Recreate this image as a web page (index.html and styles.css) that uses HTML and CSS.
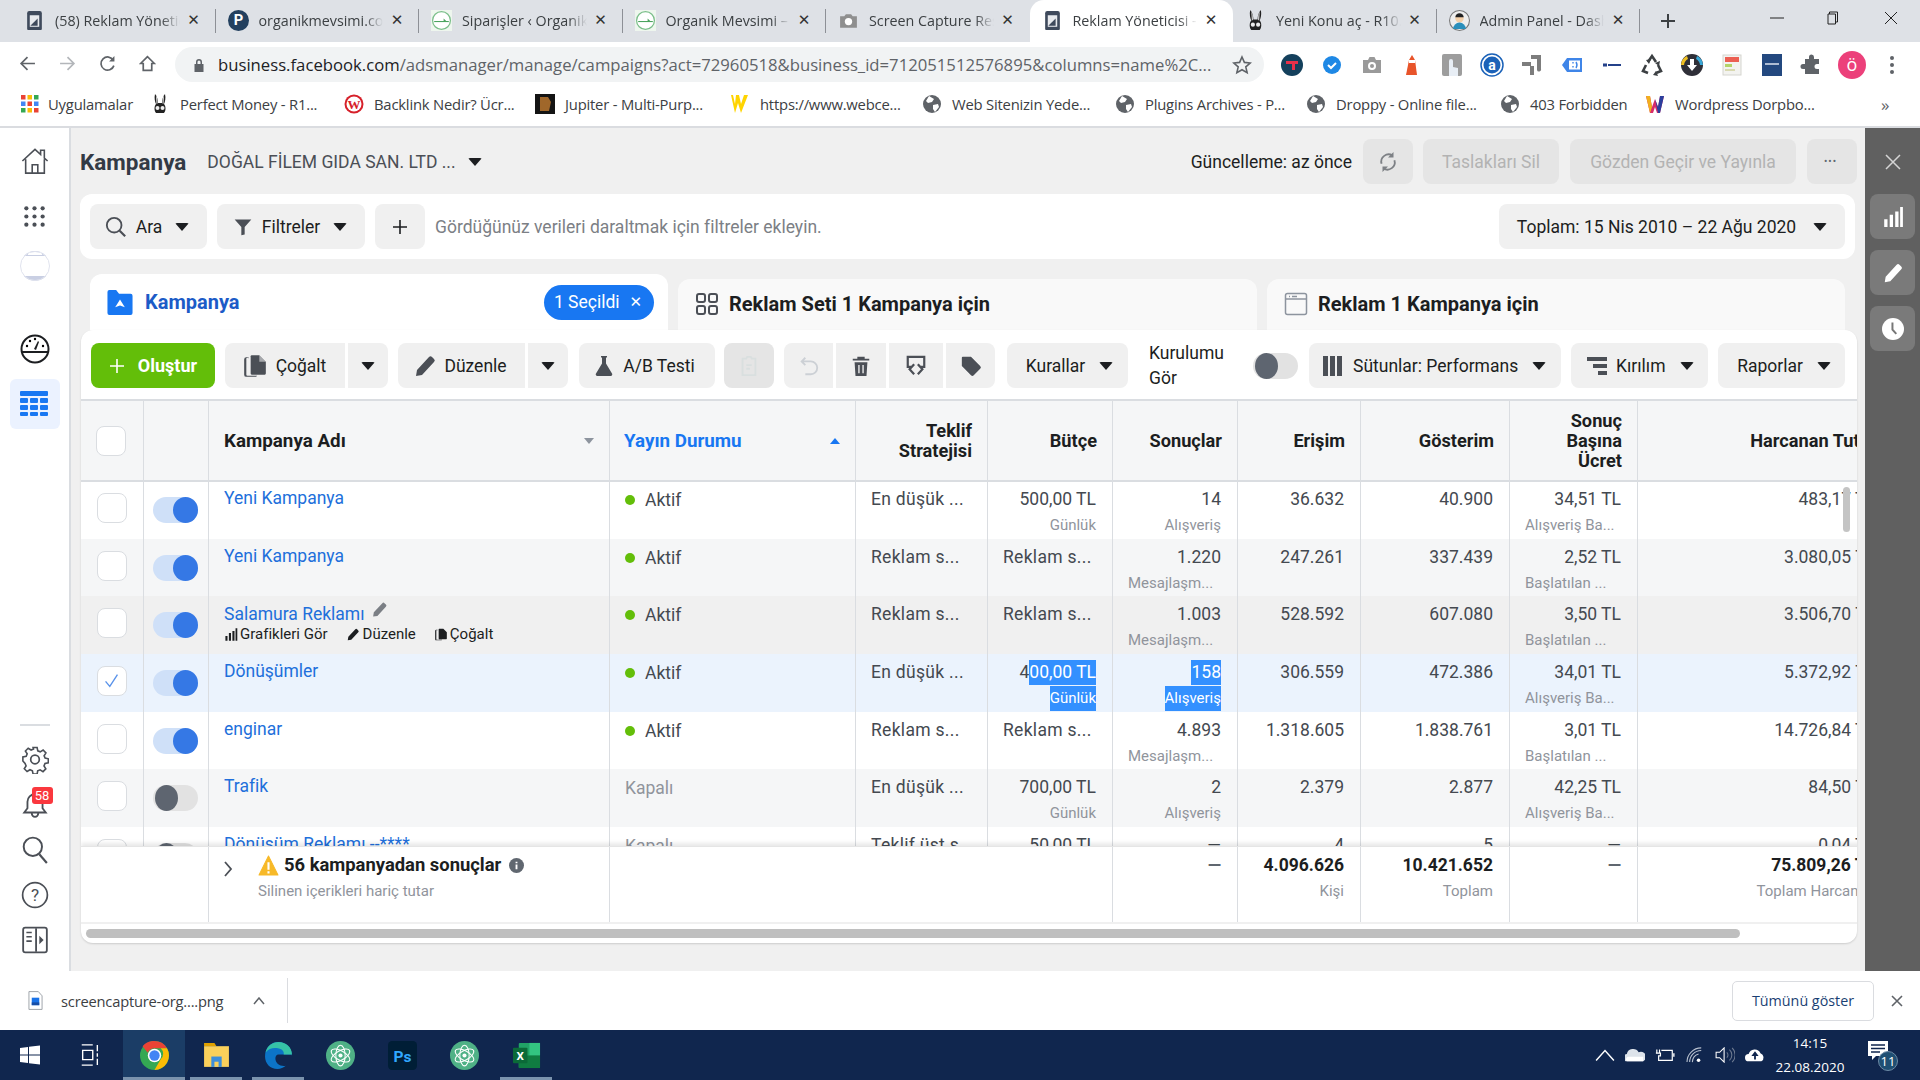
FILE: index.html
```html
<!DOCTYPE html>
<html lang="tr">
<head>
<meta charset="utf-8">
<title>Reklam Yöneticisi</title>
<link rel="stylesheet" href="styles.css">
</head>
<body>
<svg class="sprite" aria-hidden="true">
  <symbol id="fb-doc" viewBox="0 0 20 20"><path d="M3 3a2 2 0 0 1 2-2h10a2 2 0 0 1 2 2v15a1 1 0 0 1-1 1H4a1 1 0 0 1-1-1z" fill="#3f4a5c"/><rect x="5.500" y="5" width="9" height="11" fill="#e8eaee"/><path d="M6 15l7-7v7z" fill="#3f4a5c"/></symbol>
  <symbol id="leaf" viewBox="0 0 20 20"><rect width="20" height="20" fill="#eef6ee"/><circle cx="10" cy="10" r="8.500" fill="#fff" stroke="#7bbf8a" stroke-width="1.200"/><path d="M3 11h14" stroke="#4aa35e" stroke-width="1"/><path d="M12 8l3 3-3 0z" fill="#4aa35e"/></symbol>
  <symbol id="rabbit" viewBox="0 0 20 20"><path d="M5 0c2 2 3 6 3 9h4c0-3 1-7 3-9 1 4 0 8-1 10 2 2 2 7 0 9H6c-2-2-2-7 0-9-1-2-2-6-1-10z" fill="#222"/><path d="M6 1.500c1.500 2 1.500 6 1.500 8L6.500 10z" fill="#ddd"/><path d="M14 1.500c-1.500 2-1.500 6-1.500 8l1 .5z" fill="#ddd"/><circle cx="7.500" cy="14" r="2" fill="#eee"/><circle cx="12.500" cy="14" r="2" fill="#eee"/></symbol>
  <symbol id="globe" viewBox="0 0 20 20"><circle cx="10" cy="10" r="9" fill="#5f6368"/><path d="M7 2l5 3-2 3-4 1-2-2zM11 11l5-1 1 3-4 5-2-3z" fill="#fff"/></symbol>
  <symbol id="duplicate" viewBox="0 0 24 24"><path d="M6 4H4a2 2 0 0 0-2 2v14a2 2 0 0 0 2 2h9l1-1H5a1 1 0 0 1-1-1V6a1 1 0 0 1 2-1z" fill="#4b4f56"/><path d="M8 3a1 1 0 0 1 1-1h7l6 6v11a1 1 0 0 1-1 1H9a1 1 0 0 1-1-1z" fill="#4b4f56"/><path d="M16 2v6h6z" fill="#fff" opacity=".5"/></symbol>
  <symbol id="pencil" viewBox="0 0 24 24"><path d="M3 22l1-6L16 3a2 2 0 0 1 3 0l2 2a2 2 0 0 1 0 3L9 21z" fill="#4b4f56"/></symbol>
  <symbol id="flask" viewBox="0 0 24 24"><path d="M9 2h6v1.500h-1v6l6 10a1.600 1.600 0 0 1-1.500 2.500h-13A1.600 1.600 0 0 1 4 19.500l6-10v-6H9z" fill="#4b4f56"/></symbol>
  <symbol id="chart" viewBox="0 0 20 20"><path d="M2 12h3v7H2zM7 8h3v11H7zM12 5h3v14h-3zM16.500 1h2.500v18h-2.500z"/></symbol>
</svg>

<header class="tabstrip">
  <div class="tab"><svg class="fav"><use href="#fb-doc"/></svg><span class="tab-title">(58) Reklam Yöneticisi</span><span class="tab-x">✕</span></div>
  <div class="tab"><svg class="fav" viewBox="0 0 20 20"><circle cx="10" cy="10" r="10" fill="#23405f"/><text x="10" y="14.500" class="fav-p">P</text></svg><span class="tab-title">organikmevsimi.com</span><span class="tab-x">✕</span></div>
  <div class="tab"><svg class="fav"><use href="#leaf"/></svg><span class="tab-title">Siparişler ‹ Organik Mevsimi</span><span class="tab-x">✕</span></div>
  <div class="tab"><svg class="fav"><use href="#leaf"/></svg><span class="tab-title">Organik Mevsimi – Organik</span><span class="tab-x">✕</span></div>
  <div class="tab"><svg class="fav" viewBox="0 0 20 20"><path d="M2 6h4l1.500-2h5L14 6h4v11H2z" fill="#8f8f8f"/><circle cx="10" cy="11" r="3.500" fill="#fff"/></svg><span class="tab-title">Screen Capture Result</span><span class="tab-x">✕</span></div>
  <div class="tab tab-active"><svg class="fav"><use href="#fb-doc"/></svg><span class="tab-title">Reklam Yöneticisi - Kampanya</span><span class="tab-x">✕</span></div>
  <div class="tab"><svg class="fav"><use href="#rabbit"/></svg><span class="tab-title">Yeni Konu aç - R10.net</span><span class="tab-x">✕</span></div>
  <div class="tab"><svg class="fav" viewBox="0 0 20 20"><circle cx="10" cy="10" r="9.500" fill="#eee" stroke="#777"/><circle cx="10" cy="8" r="4" fill="#f3cfa8"/><path d="M6 7a4 4 0 0 1 8 0z" fill="#222"/><path d="M4 18a6 6 0 0 1 12 0z" fill="#2b8fbb"/></svg><span class="tab-title">Admin Panel - Dashboard</span><span class="tab-x">✕</span></div>
  <svg class="newtab" viewBox="0 0 16 16"><path d="M8 1v14M1 8h14" stroke="#3c4043" stroke-width="2"/></svg>
  <div class="winctl">
    <svg viewBox="0 0 14 14"><path d="M0 7h14" stroke="#222" stroke-width="1"/></svg>
    <svg viewBox="0 0 14 14"><path d="M3.500 3V1h8v10h-2M2 3h7.500v10H2z" fill="none" stroke="#222"/></svg>
    <svg viewBox="0 0 14 14"><path d="M1 1l12 12M13 1L1 13" stroke="#222"/></svg>
  </div>
</header>

<nav class="toolbar">
  <svg class="nav-ic" viewBox="0 0 16 16"><path d="M15 8H2M8 2L2 8l6 6" fill="none" stroke="#5f6368" stroke-width="1.600"/></svg>
  <svg class="nav-ic" viewBox="0 0 16 16"><path d="M1 8h13M8 2l6 6-6 6" fill="none" stroke="#b3b6ba" stroke-width="1.600"/></svg>
  <svg class="nav-ic" viewBox="0 0 16 16"><path d="M13.500 5A6.200 6.200 0 1 0 14 10" fill="none" stroke="#5f6368" stroke-width="1.600"/><path d="M14.500 1v5h-5z" fill="#5f6368"/></svg>
  <svg class="nav-ic" viewBox="0 0 16 16"><path d="M8 1.500L1.500 8H4v6.500h8V8h2.500z" fill="none" stroke="#5f6368" stroke-width="1.600"/></svg>
  <div class="omnibox">
    <svg class="lock" viewBox="0 0 12 14"><path d="M3 6V4a3 3 0 0 1 6 0v2h1.500v8h-9V6zm1.500 0h3V4a1.500 1.500 0 0 0-3 0z" fill="#5f6368"/></svg>
    <span class="url"><span class="url-host">business.facebook.com</span>/adsmanager/manage/campaigns?act=72960518&amp;business_id=712051512576895&amp;columns=name%2C...</span>
    <svg class="star" viewBox="0 0 20 20"><path d="M10 2l2.400 5.400 5.800.6-4.400 3.900 1.300 5.800L10 14.700l-5.100 3 1.300-5.800L1.800 8l5.800-.6z" fill="none" stroke="#5f6368" stroke-width="1.600"/></svg>
  </div>
  <div class="extensions">
    <svg viewBox="0 0 24 24"><circle cx="12" cy="12" r="11" fill="#14405c"/><path d="M6 8h12v3h-3v6h-3v-6H6z" fill="#e8304a"/></svg>
    <svg viewBox="0 0 24 24"><path d="M12 3a9 9 0 0 1 9 9 9 9 0 0 1-9 9 9 9 0 0 1-9-9 9 9 0 0 1 9-9z" fill="#1e88e5"/><path d="M8 12l3 3 5-5" fill="none" stroke="#fff" stroke-width="2"/></svg>
    <svg viewBox="0 0 24 24"><path d="M3 7h5l1.500-3h5L16 7h5v13H3z" fill="#9a9a9a"/><circle cx="12" cy="13" r="4" fill="#fff"/><circle cx="12" cy="13" r="2" fill="#9a9a9a"/></svg>
    <svg viewBox="0 0 24 24"><path d="M9 7l3-5 3 5 2 15H6z" fill="#e8542a"/><rect x="9" y="7" width="6" height="3" fill="#fff"/></svg>
    <svg viewBox="0 0 24 24"><rect x="2" y="1" width="20" height="22" rx="2" fill="#9d9d9d"/><path d="M9 20V8a2 2 0 0 1 4 0v6l5 1v8H9z" fill="#e8eef5"/></svg>
    <svg viewBox="0 0 24 24"><circle cx="12" cy="12" r="11" fill="#fff" stroke="#1b62b8" stroke-width="1.500"/><circle cx="12" cy="12" r="8.500" fill="#1b62b8"/><text x="12" y="16.500" class="ext-a">a</text></svg>
    <svg viewBox="0 0 24 24"><path d="M11 2h10v14a2 2 0 0 1-4 1V6h-6z M2 9h9v4H2z M10 13h4v9h-4z" fill="#7d7d7d"/></svg>
    <svg viewBox="0 0 24 24"><path d="M2 12l5-7h15v14H7z" fill="#3f85e8"/><rect x="9" y="7.500" width="11" height="9" fill="#fff"/><path d="M13 9v1.500M13 13v1.500M16 9q2 3 0 6" stroke="#3f85e8" stroke-width="1.400" fill="none"/></svg>
    <svg viewBox="0 0 24 24"><rect x="3" y="10.500" width="4" height="3" fill="#24418a"/><rect x="8" y="11" width="13" height="2" fill="#24418a"/></svg>
    <svg viewBox="0 0 24 24"><g fill="none" stroke="#3c4043" stroke-width="2.600"><path d="M8 9l4-6 4 6M18 12l3 6-5 2M8 20l-5-2 3-6"/></g><path d="M6 7l5-1-2 5zM13 22l3-4 2 5zM20 8l-1 5-4-3z" fill="#3c4043"/></svg>
    <svg viewBox="0 0 24 24"><circle cx="12" cy="12" r="11" fill="#2f2f38"/><path d="M1 12a11 11 0 0 1 6-9l1 3a8 8 0 0 0-4 6z" fill="#f0c021"/><path d="M23 12a11 11 0 0 0-6-9l-1 3a8 8 0 0 1 4 6z" fill="#39a8d8"/><path d="M10 6h4v6h3l-5 6-5-6h3z" fill="#fff"/></svg>
    <svg viewBox="0 0 24 24"><rect x="3" y="2" width="18" height="20" fill="#f3f3f0" stroke="#d5d5d0"/><rect x="5" y="4" width="14" height="5" fill="#ec5f52"/><rect x="5" y="11" width="7" height="3" fill="#b4d46a"/><rect x="5" y="16" width="10" height="2" fill="#d9d9b0"/></svg>
    <svg viewBox="0 0 24 24"><rect x="2" y="1" width="20" height="22" fill="#23487f"/><rect x="5" y="10" width="14" height="2" fill="#aebcd3"/></svg>
    <svg viewBox="0 0 24 24"><path d="M9 4a2.500 2.500 0 0 1 5 0v2h5v5h-2a2.500 2.500 0 0 0 0 5h2v5H5v-5H3a2.500 2.500 0 0 1 0-5h2V6h4z" fill="#5f6368"/></svg>
    <span class="avatar">ö</span>
    <svg viewBox="0 0 24 24"><circle cx="12" cy="5" r="2" fill="#5f6368"/><circle cx="12" cy="12" r="2" fill="#5f6368"/><circle cx="12" cy="19" r="2" fill="#5f6368"/></svg>
  </div>
</nav>

<div class="bookmarks">
  <div class="bm bm-apps"><svg viewBox="0 0 20 20"><rect x="1" y="1" width="4.500" height="4.500" fill="#ea4335"/><rect x="7.500" y="1" width="4.500" height="4.500" fill="#fbbc05"/><rect x="14" y="1" width="4.500" height="4.500" fill="#34a853"/><rect x="1" y="7.500" width="4.500" height="4.500" fill="#4285f4"/><rect x="7.500" y="7.500" width="4.500" height="4.500" fill="#ea4335"/><rect x="14" y="7.500" width="4.500" height="4.500" fill="#4285f4"/><rect x="1" y="14" width="4.500" height="4.500" fill="#34a853"/><rect x="7.500" y="14" width="4.500" height="4.500" fill="#fbbc05"/><rect x="14" y="14" width="4.500" height="4.500" fill="#ea4335"/></svg><span>Uygulamalar</span></div>
  <div class="bm"><svg><use href="#rabbit"/></svg><span>Perfect Money - R1...</span></div>
  <div class="bm"><svg viewBox="0 0 20 20"><circle cx="10" cy="10" r="9.500" fill="#d6202a"/><circle cx="10" cy="10" r="7.500" fill="#fff"/><text x="10" y="15" class="bm-w">W</text></svg><span>Backlink Nedir? Ücr...</span></div>
  <div class="bm"><svg viewBox="0 0 20 20"><rect width="20" height="20" fill="#141414"/><path d="M5 3h8l3 5-2 9H5z" fill="#a0672a"/></svg><span>Jupiter - Multi-Purp...</span></div>
  <div class="bm"><svg viewBox="0 0 20 20"><path d="M1 1l4 18 3-10 3 10 7-18-4 0-3 9-2-9-3 0-1 9-2-9z" fill="#ffd400"/></svg><span>https://www.webce...</span></div>
  <div class="bm"><svg><use href="#globe"/></svg><span>Web Sitenizin Yede...</span></div>
  <div class="bm"><svg><use href="#globe"/></svg><span>Plugins Archives - P...</span></div>
  <div class="bm"><svg><use href="#globe"/></svg><span>Droppy - Online file...</span></div>
  <div class="bm"><svg><use href="#globe"/></svg><span>403 Forbidden</span></div>
  <div class="bm"><svg viewBox="0 0 20 20"><rect x="1" y="1" width="18" height="18" fill="#fff"/><path d="M1 2h4l2 11 3-8 3 8 2-11h4l-4 17h-3l-2-6-2 6H5z" fill="#d92b6a"/><path d="M10 5l3 8 2-11h4l-4 17h-2z" fill="#2a3f9d"/><path d="M1 2h4l2 11-2 6z" fill="#f2b01e"/></svg><span>Wordpress Dorpbo...</span></div>
  <span class="bm-more">»</span>
</div>

<div class="app">
  <aside class="rail">
    <div class="rail-top">
      <svg class="rail-ic rail-home" viewBox="0 0 30 30"><path d="M1.500 15L15 2.500l6 5.500V3.500h4V12l3.500 3M5 13v15h20V13M12 28v-9h6v9" fill="none" stroke="#4b4f56" stroke-width="1.700"/></svg>
      <svg class="rail-ic rail-grid" viewBox="0 0 24 24"><g fill="#4b4f56"><circle cx="3.500" cy="3.500" r="2.200"/><circle cx="12" cy="3.500" r="2.200"/><circle cx="20.500" cy="3.500" r="2.200"/><circle cx="3.500" cy="12" r="2.200"/><circle cx="12" cy="12" r="2.200"/><circle cx="20.500" cy="12" r="2.200"/><circle cx="3.500" cy="20.500" r="2.200"/><circle cx="12" cy="20.500" r="2.200"/><circle cx="20.500" cy="20.500" r="2.200"/></g></svg>
      <svg class="rail-ic rail-biz" viewBox="0 0 30 30"><defs><clipPath id="biz"><circle cx="15" cy="15" r="15"/></clipPath></defs><g clip-path="url(#biz)"><rect width="30" height="30" fill="#fff"/><rect y="0" width="30" height="5" fill="#c9cfe3"/><rect y="25" width="30" height="5" fill="#c9cfe3"/><rect x="8" y="1" width="14" height="3" fill="#fff"/></g><circle cx="15" cy="15" r="14.500" fill="none" stroke="#e0e3ee"/></svg>
      <svg class="rail-ic rail-gauge" viewBox="0 0 30 30"><circle cx="15" cy="15" r="13.500" fill="none" stroke="#1c1e21" stroke-width="2"/><path d="M2 18h26" stroke="#1c1e21" stroke-width="2"/><path d="M14 15l4-8 1 1-3 8z" fill="#1c1e21"/><circle cx="7" cy="12" r="1.200"/><circle cx="10" cy="7" r="1.200"/><circle cx="15" cy="5" r="1.200"/><circle cx="23" cy="12" r="1.200"/></svg>
      <div class="rail-active"><svg viewBox="0 0 30 26"><g fill="#1877f2"><rect width="28" height="5" rx="1"/><rect y="7" width="8" height="5" rx="1"/><rect x="10" y="7" width="8" height="5" rx="1"/><rect x="20" y="7" width="8" height="5" rx="1"/><rect y="14" width="8" height="5" rx="1"/><rect x="10" y="14" width="8" height="5" rx="1"/><rect x="20" y="14" width="8" height="5" rx="1"/><rect y="21" width="8" height="4" rx="1"/><rect x="10" y="21" width="8" height="4" rx="1"/><rect x="20" y="21" width="8" height="4" rx="1"/></g></svg></div>
    </div>
    <div class="rail-bottom">
      <div class="rail-sep"></div>
      <svg class="rail-ic" viewBox="0 0 26 26"><path d="M11 1.500h4l.7 3.300 2.400 1 2.900-1.800 2.800 2.800-1.800 2.900 1 2.400 3.200.7v4l-3.300.7-1 2.400 1.800 2.900-2.800 2.800-2.900-1.800-2.400 1-.6 3.200h-4l-.7-3.300-2.400-1-2.900 1.800-2.800-2.800 1.800-2.900-1-2.400L.8 15v-4l3.300-.7 1-2.400-1.800-2.900 2.800-2.800 2.900 1.800 2.400-1z" transform="translate(1 0) scale(.93)" fill="none" stroke="#4b4f56" stroke-width="1.600"/><circle cx="13" cy="12.500" r="4" fill="none" stroke="#4b4f56" stroke-width="1.600"/></svg>
      <div class="rail-bell">
        <svg class="rail-ic" viewBox="0 0 26 26"><path d="M13 3a7 7 0 0 1 7 7v6l3 4H3l3-4v-6a7 7 0 0 1 7-7zM10 21a3 3 0 0 0 6 0" fill="none" stroke="#4b4f56" stroke-width="1.700"/></svg>
        <span class="bell-badge">58</span>
      </div>
      <svg class="rail-ic" viewBox="0 0 26 26"><circle cx="11" cy="10" r="8.500" fill="none" stroke="#4b4f56" stroke-width="1.800"/><path d="M17 17l7 8" stroke="#4b4f56" stroke-width="2"/></svg>
      <svg class="rail-ic" viewBox="0 0 26 26"><circle cx="13" cy="13" r="11.500" fill="none" stroke="#4b4f56" stroke-width="1.600"/><text x="13" y="18.500" class="rail-q">?</text></svg>
      <svg class="rail-ic" viewBox="0 0 26 26"><rect x="2" y="1.500" width="22" height="23" rx="2" fill="none" stroke="#4b4f56" stroke-width="1.700"/><path d="M14 2v22" stroke="#4b4f56" stroke-width="1.700"/><path d="M5 6h5M5 10h5M5 14h5" stroke="#4b4f56" stroke-width="1.500"/><path d="M17 9l4 4-4 4z" fill="#4b4f56"/></svg>
    </div>
  </aside>

  <main class="workspace">
    <div class="page-head">
      <h1 class="page-title">Kampanya</h1>
      <span class="account">DOĞAL FİLEM GIDA SAN. LTD ...</span><i class="caret"></i>
      <span class="updated">Güncelleme: az önce</span>
      <button class="btn btn-off btn-refresh"><svg viewBox="0 0 24 24"><path d="M5 14a8 8 0 0 1 12-9M19 10a8 8 0 0 1-12 9" fill="none" stroke="#7d8085" stroke-width="2"/><path d="M18 1v6h-6zM6 23v-6h6z" fill="#7d8085"/></svg></button>
      <button class="btn btn-off btn-drafts">Taslakları Sil</button>
      <button class="btn btn-off btn-review">Gözden Geçir ve Yayınla</button>
      <button class="btn btn-off btn-more">•••</button>
    </div>

    <div class="filter-card">
      <button class="btn btn-ara"><svg viewBox="0 0 24 24"><circle cx="10" cy="10" r="8" fill="none" stroke="#4b4f56" stroke-width="2"/><path d="M16 16l6 6" stroke="#4b4f56" stroke-width="2.400"/></svg>Ara<i class="caret"></i></button>
      <button class="btn btn-filter"><svg viewBox="0 0 24 24"><path d="M2 3h20l-8 9v9l-4 1V12z" fill="#4b4f56"/></svg>Filtreler<i class="caret"></i></button>
      <button class="btn btn-plus"><svg viewBox="0 0 16 16"><path d="M8 1v14M1 8h14" stroke="#1c1e21" stroke-width="1.600"/></svg></button>
      <span class="filter-hint">Gördüğünüz verileri daraltmak için filtreler ekleyin.</span>
      <button class="btn btn-date">Toplam: 15 Nis 2010 – 22 Ağu 2020<i class="caret"></i></button>
    </div>

    <div class="tabs">
      <div class="level level-active">
        <svg class="level-ic" viewBox="0 0 28 28"><path d="M1 3a2 2 0 0 1 2-2h7l3 4h12a2 2 0 0 1 2 2v18a2 2 0 0 1-2 2H3a2 2 0 0 1-2-2z" fill="#1877f2"/><path d="M14 11l5 8-5-2-5 2z" fill="#fff"/></svg>
        <span class="level-name">Kampanya</span>
        <span class="chip">1 Seçildi<span class="chip-x">✕</span></span>
      </div>
      <div class="level">
        <svg class="level-ic" viewBox="0 0 24 24"><g fill="none" stroke="#4b4f56" stroke-width="2"><rect x="2" y="2" width="8" height="8" rx="2"/><rect x="14" y="2" width="8" height="8" rx="2"/><rect x="2" y="14" width="8" height="8" rx="2"/><rect x="14" y="14" width="8" height="8" rx="2"/></g></svg>
        <span class="level-label">Reklam Seti 1 Kampanya için</span>
      </div>
      <div class="level">
        <svg class="level-ic" viewBox="0 0 24 24"><rect x="1.500" y="1.500" width="21" height="21" rx="2" fill="none" stroke="#8d949e" stroke-width="1.500"/><path d="M2 7h20M5 4.500h1M8 4.500h5" stroke="#8d949e" stroke-width="1.500"/></svg>
        <span class="level-label">Reklam 1 Kampanya için</span>
      </div>
    </div>

    <section class="table-card">
      <div class="actions">
        <button class="btn btn-create"><svg viewBox="0 0 16 16"><path d="M8 1v14M1 8h14" stroke="#fff" stroke-width="1.600"/></svg>Oluştur</button>
        <div class="split">
          <button class="btn btn-dup"><svg viewBox="0 0 24 24"><use href="#duplicate"/></svg>Çoğalt</button>
          <button class="btn btn-split"><i class="caret"></i></button>
        </div>
        <div class="split">
          <button class="btn btn-edit"><svg viewBox="0 0 24 24"><use href="#pencil"/></svg>Düzenle</button>
          <button class="btn btn-split"><i class="caret"></i></button>
        </div>
        <button class="btn btn-ab"><svg viewBox="0 0 24 24"><use href="#flask"/></svg>A/B Testi</button>
        <button class="btn btn-off btn-clip"><svg viewBox="0 0 24 24"><path d="M5 4h4l1-2h4l1 2h4v18H5z" fill="none" stroke="#d9dfdf" stroke-width="2"/><path d="M9 11h6M9 15h4" stroke="#d9dfdf" stroke-width="2"/></svg></button>
        <div class="icon-group">
          <button class="btn btn-ic-a"><svg viewBox="0 0 24 24"><path d="M8 3L4 7l4 4M4 7h10a7 7 0 0 1 0 14H8" fill="none" stroke="#ccd0d5" stroke-width="2"/></svg></button>
          <button class="btn btn-ic-b"><svg viewBox="0 0 24 24"><path d="M8 4V2h8v2h5v2H3V4zM5 8h14l-1 15H6zM9 11v9h1.500v-9zM13.500 11v9H15v-9z" fill="#4b4f56" fill-rule="evenodd"/></svg></button>
          <button class="btn btn-ic-c"><svg viewBox="0 0 24 24"><path d="M7 13H3V2h18v11h-4" fill="none" stroke="#4b4f56" stroke-width="2.400"/><path d="M10 10l-5 5.500 5 5.500M14 10l5 5.500-5 5.500" fill="none" stroke="#4b4f56" stroke-width="2.400"/></svg></button>
          <button class="btn btn-ic-d"><svg viewBox="0 0 24 24"><path d="M2 3a1 1 0 0 1 1-1h9l10 10a2 2 0 0 1 0 3l-7 7a2 2 0 0 1-3 0L2 12z" fill="#4b4f56"/></svg></button>
        </div>
        <button class="btn btn-rules">Kurallar<i class="caret"></i></button>
        <span class="setup-label">Kurulumu<br>Gör</span>
        <span class="toggle toggle-off toggle-setup"></span>
        <button class="btn btn-cols"><svg viewBox="0 0 20 20"><path d="M0 0h5v20H0zM7 0h5v20H7zM14 0h5v20h-5z" fill="#4b4f56"/></svg>Sütunlar: Performans<i class="caret"></i></button>
        <button class="btn btn-break"><svg viewBox="0 0 20 20"><path d="M0 1h20v4H0zM6 8h14v4H6zM11 15h9v4h-9z" fill="#4b4f56"/></svg>Kırılım<i class="caret"></i></button>
        <button class="btn btn-reports">Raporlar<i class="caret"></i></button>
      </div>

      <div class="grid-wrap">
        <div class="row row-head">
          <div class="cell"><span class="check"></span></div>
          <div class="cell"></div>
          <div class="cell th-left">Kampanya Adı<i class="sort sort-down"></i></div>
          <div class="cell th-left th-active">Yayın Durumu<i class="sort sort-up"></i></div>
          <div class="cell th">Teklif<br>Stratejisi</div>
          <div class="cell th">Bütçe</div>
          <div class="cell th">Sonuçlar</div>
          <div class="cell th">Erişim</div>
          <div class="cell th">Gösterim</div>
          <div class="cell th">Sonuç<br>Başına<br>Ücret</div>
          <div class="cell th">Harcanan Tutar</div>
        </div>

        <div class="rows">
          <div class="row">
            <div class="cell cell-check"><span class="check"></span></div>
            <div class="cell cell-toggle"><span class="toggle"></span></div>
            <div class="cell cell-name"><a>Yeni Kampanya</a></div>
            <div class="cell cell-status"><i class="dot"></i>Aktif</div>
            <div class="cell cell-text">En düşük ...</div>
            <div class="cell num">500,00 TL<small>Günlük</small></div>
            <div class="cell num">14<small>Alışveriş</small></div>
            <div class="cell num">36.632</div>
            <div class="cell num">40.900</div>
            <div class="cell num">34,51 TL<small class="trunc">Alışveriş Ba...</small></div>
            <div class="cell num">483,17 TL</div>
          </div>
          <div class="row row-alt">
            <div class="cell cell-check"><span class="check"></span></div>
            <div class="cell cell-toggle"><span class="toggle"></span></div>
            <div class="cell cell-name"><a>Yeni Kampanya</a></div>
            <div class="cell cell-status"><i class="dot"></i>Aktif</div>
            <div class="cell cell-text">Reklam s...</div>
            <div class="cell cell-text">Reklam s...</div>
            <div class="cell num">1.220<small class="trunc">Mesajlaşm...</small></div>
            <div class="cell num">247.261</div>
            <div class="cell num">337.439</div>
            <div class="cell num">2,52 TL<small class="trunc">Başlatılan ...</small></div>
            <div class="cell num">3.080,05 TL</div>
          </div>
          <div class="row row-hover">
            <div class="cell cell-check"><span class="check"></span></div>
            <div class="cell cell-toggle"><span class="toggle"></span></div>
            <div class="cell cell-name"><a>Salamura Reklamı</a><svg class="name-pen" viewBox="0 0 24 24"><path d="M3 22l1-6L16 3a2 2 0 0 1 3 0l2 2a2 2 0 0 1 0 3L9 21z" fill="#7b7f85"/></svg>
              <div class="row-tools">
                <span class="tool tool-chart"><svg viewBox="0 0 20 20"><use href="#chart"/></svg>Grafikleri Gör</span>
                <span class="tool tool-edit"><svg viewBox="0 0 24 24"><path d="M3 22l1-6L16 3a2 2 0 0 1 3 0l2 2a2 2 0 0 1 0 3L9 21z"/></svg>Düzenle</span>
                <span class="tool"><svg viewBox="0 0 24 24"><path d="M6 4H4a2 2 0 0 0-2 2v14a2 2 0 0 0 2 2h9l1-1H5a1 1 0 0 1-1-1V6a1 1 0 0 1 2-1zM8 3a1 1 0 0 1 1-1h7l6 6v11a1 1 0 0 1-1 1H9a1 1 0 0 1-1-1z"/></svg>Çoğalt</span>
              </div>
            </div>
            <div class="cell cell-status"><i class="dot"></i>Aktif</div>
            <div class="cell cell-text">Reklam s...</div>
            <div class="cell cell-text">Reklam s...</div>
            <div class="cell num">1.003<small class="trunc">Mesajlaşm...</small></div>
            <div class="cell num">528.592</div>
            <div class="cell num">607.080</div>
            <div class="cell num">3,50 TL<small class="trunc">Başlatılan ...</small></div>
            <div class="cell num">3.506,70 TL</div>
          </div>
          <div class="row row-selected">
            <div class="cell cell-check"><span class="check check-on"><svg viewBox="0 0 20 20"><path d="M3 11l5 6 9-14" fill="none" stroke="#5a93ea" stroke-width="1.600"/></svg></span></div>
            <div class="cell cell-toggle"><span class="toggle"></span></div>
            <div class="cell cell-name"><a>Dönüşümler</a></div>
            <div class="cell cell-status"><i class="dot"></i>Aktif</div>
            <div class="cell cell-text">En düşük ...</div>
            <div class="cell num">4<span class="sel">00,00 TL</span><small><span class="sel">Günlük</span></small></div>
            <div class="cell num"><span class="sel">158</span><small><span class="sel">Alışveriş</span></small></div>
            <div class="cell num">306.559</div>
            <div class="cell num">472.386</div>
            <div class="cell num">34,01 TL<small class="trunc">Alışveriş Ba...</small></div>
            <div class="cell num">5.372,92 TL</div>
          </div>
          <div class="row">
            <div class="cell cell-check"><span class="check"></span></div>
            <div class="cell cell-toggle"><span class="toggle"></span></div>
            <div class="cell cell-name"><a>enginar</a></div>
            <div class="cell cell-status"><i class="dot"></i>Aktif</div>
            <div class="cell cell-text">Reklam s...</div>
            <div class="cell cell-text">Reklam s...</div>
            <div class="cell num">4.893<small class="trunc">Mesajlaşm...</small></div>
            <div class="cell num">1.318.605</div>
            <div class="cell num">1.838.761</div>
            <div class="cell num">3,01 TL<small class="trunc">Başlatılan ...</small></div>
            <div class="cell num">14.726,84 TL</div>
          </div>
          <div class="row row-alt">
            <div class="cell cell-check"><span class="check"></span></div>
            <div class="cell cell-toggle"><span class="toggle toggle-off"></span></div>
            <div class="cell cell-name"><a>Trafik</a></div>
            <div class="cell cell-status cell-off">Kapalı</div>
            <div class="cell cell-text">En düşük ...</div>
            <div class="cell num">700,00 TL<small>Günlük</small></div>
            <div class="cell num">2<small>Alışveriş</small></div>
            <div class="cell num">2.379</div>
            <div class="cell num">2.877</div>
            <div class="cell num">42,25 TL<small class="trunc">Alışveriş Ba...</small></div>
            <div class="cell num">84,50 TL</div>
          </div>
          <div class="row">
            <div class="cell cell-check"><span class="check"></span></div>
            <div class="cell cell-toggle"><span class="toggle toggle-off"></span></div>
            <div class="cell cell-name"><a>Dönüşüm Reklamı --****</a></div>
            <div class="cell cell-status cell-off">Kapalı</div>
            <div class="cell cell-text">Teklif üst s...</div>
            <div class="cell num">50,00 TL</div>
            <div class="cell num">—</div>
            <div class="cell num">4</div>
            <div class="cell num">5</div>
            <div class="cell num">—</div>
            <div class="cell num">0,04 TL</div>
          </div>
        </div>

        <div class="row row-foot">
          <div class="cell foot-blank"></div>
          <div class="cell foot-name">
            <svg class="foot-chevron" viewBox="0 0 10 16"><path d="M2 1l6 7-6 7" fill="none" stroke="#4b4f56" stroke-width="1.800"/></svg>
            <div>
              <div class="foot-title"><svg viewBox="0 0 20 20"><path d="M10 1l9 18H1z" fill="#f7b928" stroke="#f7b928" stroke-linejoin="round"/><path d="M10 7v7M10 15.500v2" stroke="#fff" stroke-width="2"/></svg>56 kampanyadan sonuçlar<svg class="foot-info" viewBox="0 0 16 16"><circle cx="8" cy="8" r="8" fill="#606770"/><path d="M8 7v5M8 4v1.600" stroke="#fff" stroke-width="2"/></svg></div>
              <small>Silinen içerikleri hariç tutar</small>
            </div>
          </div>
          <div class="cell foot-gap"></div>
          <div class="cell num foot-num foot-dash">—</div>
          <div class="cell num foot-num">4.096.626<small>Kişi</small></div>
          <div class="cell num foot-num">10.421.652<small>Toplam</small></div>
          <div class="cell num foot-num foot-dash">—</div>
          <div class="cell num foot-num">75.809,26 TL<small>Toplam Harcanan</small></div>
        </div>
      </div>
      <div class="hscroll"><div class="hscroll-thumb"></div></div>
      <div class="vscroll"></div>
    </section>
  </main>

  <aside class="side-panel">
    <svg class="panel-x" viewBox="0 0 16 16"><path d="M1 1l14 14M15 1L1 15" stroke="#d5d5d5" stroke-width="1.500"/></svg>
    <button class="panel-btn"><svg viewBox="0 0 20 20"><use href="#chart"/></svg></button>
    <button class="panel-btn"><svg viewBox="0 0 24 24"><path d="M3 22l1-6L16 3a2 2 0 0 1 3 0l2 2a2 2 0 0 1 0 3L9 21z"/></svg></button>
    <button class="panel-btn"><svg viewBox="0 0 20 20"><circle cx="10" cy="10" r="10"/><path d="M9.500 4v6.500l3.500 4" fill="none" stroke="#777" stroke-width="1.800"/></svg></button>
  </aside>
</div>

<div class="downloads">
  <svg class="dl-file" viewBox="0 0 16 20"><path d="M1 .500h10L15 5v14.500H1z" fill="#fff" stroke="#9aa0a6"/><rect x="4" y="7" width="8" height="8" fill="#1a73e8"/><rect x="4" y="12" width="8" height="3" fill="#174ea6"/></svg>
  <span class="dl-name">screencapture-org....png</span>
  <svg class="dl-chev" viewBox="0 0 12 8"><path d="M1 7l5-6 5 6" fill="none" stroke="#5f6368" stroke-width="1.500"/></svg>
  <span class="dl-sep"></span>
  <button class="dl-all">Tümünü göster</button>
  <svg class="dl-x" viewBox="0 0 12 12"><path d="M1 1l10 10M11 1L1 11" stroke="#5f6368" stroke-width="1.600"/></svg>
</div>

<footer class="taskbar">
  <div class="task task-start"><svg viewBox="0 0 20 20"><path d="M0 3l8-1v7.500H0zM9 1.800L20 .5v9H9zM0 10.500h8V18l-8-1zM9 10.500h11v9L9 18.200z" fill="#fff"/></svg></div>
  <div class="task task-view"><svg viewBox="0 0 20 24"><path d="M1 1h12M1 23h12M2 7h11v10H2zM18 1v7M18 10v4M18 16v7" fill="none" stroke="#fff" stroke-width="1.500"/></svg></div>
  <div class="task task-active task-open"><svg viewBox="0 0 28 28" class="ic-lg"><circle cx="14" cy="14" r="14" fill="#34a853"/><path d="M14 0a14 14 0 0 1 12.100 7H14a7 7 0 0 0-6.500 4.400L2.500 5A14 14 0 0 1 14 0z" fill="#ea4335"/><path d="M26.100 7A14 14 0 0 1 14 28l6-10.500a7 7 0 0 0 0-10.500z" fill="#fbbc05"/><circle cx="14" cy="14" r="6.500" fill="#fff"/><circle cx="14" cy="14" r="5" fill="#4285f4"/></svg></div>
  <div class="task task-open"><svg viewBox="0 0 28 28" class="ic-lg"><path d="M2 2h10l2 3h-12z" fill="#e0a100"/><path d="M2 5h24v20H2z" fill="#fbd15b"/><path d="M9 15h10v10H9z" fill="#3d8fdc"/><rect x="12" y="20" width="4" height="5" fill="#fbd15b"/></svg></div>
  <div class="task task-open-none"><svg viewBox="0 0 28 28" class="ic-lg"><path d="M27 15C27 6 21 1 14 1 6 1 1 7 1 15c0 7 5 12 12 12 3 0 6-1 8-3-5 1-10-2-10-7 0-2 1-4 3-4h13z" fill="#0c74c7"/><path d="M14 1C8 1 3 5 1.500 11c3-4 8-5 12-4 5 1 6 4 5.500 6H27C27 6 21 1 14 1z" fill="#36c2a6"/></svg></div>
  <div class="task"><svg viewBox="0 0 28 28" class="ic-lg"><circle cx="14" cy="14" r="14" fill="#4fb186"/><g fill="none" stroke="#fff" stroke-width="1"><ellipse cx="14" cy="14" rx="4.500" ry="10"/><ellipse cx="14" cy="14" rx="4.500" ry="10" transform="rotate(60 14 14)"/><ellipse cx="14" cy="14" rx="4.500" ry="10" transform="rotate(-60 14 14)"/></g><circle cx="14" cy="14" r="2" fill="#fff"/></svg></div>
  <div class="task"><svg viewBox="0 0 28 28" class="ic-lg"><rect width="28" height="28" rx="4" fill="#001e36"/><text x="14" y="20" class="ps">Ps</text></svg></div>
  <div class="task"><svg viewBox="0 0 28 28" class="ic-lg"><circle cx="14" cy="14" r="14" fill="#4fb186"/><g fill="none" stroke="#fff" stroke-width="1"><ellipse cx="14" cy="14" rx="4.500" ry="10"/><ellipse cx="14" cy="14" rx="4.500" ry="10" transform="rotate(60 14 14)"/><ellipse cx="14" cy="14" rx="4.500" ry="10" transform="rotate(-60 14 14)"/></g><circle cx="14" cy="14" r="2" fill="#fff"/></svg></div>
  <div class="task task-open"><svg viewBox="0 0 30 28" class="ic-lg"><rect x="7" y="1" width="22" height="26" rx="1" fill="#21a366"/><rect x="18" y="1" width="11" height="13" fill="#33c481"/><rect x="7" y="14" width="22" height="13" fill="#107c41"/><rect x="1" y="6" width="15" height="16" rx="1" fill="#0b6a38"/><text x="8.500" y="19" class="xl">X</text></svg></div>
  <div class="tray">
    <svg viewBox="0 0 18 12"><path d="M1 11l8-9 8 9" fill="none" stroke="#fff" stroke-width="1.300"/></svg>
    <svg viewBox="0 0 22 16"><path d="M2 15a4 4 0 0 1 0-8 7 7 0 0 1 13-2 5 5 0 0 1 5 10z" fill="#dde3ea"/><path d="M2 15a3 3 0 0 1 3-5h15v5z" fill="#fff"/></svg>
    <svg viewBox="0 0 22 16"><path d="M5 2v4M2 2v4M1 6h5v3H4v5h15V3H7" fill="none" stroke="#fff" stroke-width="1.300"/><path d="M20 6h1.500v4H20z" fill="#fff"/></svg>
    <svg viewBox="0 0 20 18"><path d="M1 17A16 16 0 0 1 17 1M4 17A13 13 0 0 1 17 4M7 17A10 10 0 0 1 14 8" fill="none" stroke="#b9c2d0" stroke-width="1.200"/><circle cx="14" cy="15" r="2" fill="#fff"/></svg>
    <svg viewBox="0 0 22 18"><path d="M1 6h4l5-5v16l-5-5H1z" fill="none" stroke="#fff" stroke-width="1.200"/><path d="M13 6a4 4 0 0 1 0 6M16 3a8 8 0 0 1 0 12M19 1a11 11 0 0 1 0 16" fill="none" stroke="#6d7a90" stroke-width="1.200"/></svg>
    <svg viewBox="0 0 22 16"><path d="M4 15a4 4 0 0 1 0-8 7 7 0 0 1 13-1 5 5 0 0 1 1 9z" fill="#fff"/><path d="M11 4l-4 5h3v4h2V9h3z" fill="#10264e"/></svg>
  </div>
  <div class="clock"><span>14:15</span><span>22.08.2020</span></div>
  <div class="notif"><svg viewBox="0 0 20 20"><path d="M0 0h20v15H8l-4 4v-4H0z" fill="#fff"/><path d="M3 4h14M3 7.500h14M3 11h9" stroke="#10264e" stroke-width="1.300"/></svg><span class="notif-count">11</span></div>
</footer>
</body>
</html>
```

FILE: styles.css
```css
* { box-sizing: border-box; }
html, body { margin: 0; height: 100%; }
body {
  width: 1920px; height: 1080px; overflow: hidden;
  display: flex; flex-direction: column;
  font-family: Roboto, "Liberation Sans", sans-serif;
  color: #1c1e21; background: #fff;
}
.sprite { display: none; }
button { font: inherit; border: 0; padding: 0; color: inherit; }
svg { display: block; flex: none; }

/* Browser chrome */
.tabstrip {
  height: 42px; flex: none; background: #dee1e6;
  display: flex; align-items: stretch; padding-left: 12px; position: relative;
  font-family: "Open Sans", "Noto Sans", sans-serif;
}
.tab {
  width: 203.500px; display: flex; align-items: center; padding: 0 15px 2px 12px; position: relative;
  font-size: 14.300px; color: #3c4043;
}
.tab::after { content: ""; position: absolute; right: 0; top: 9px; bottom: 9px; width: 1px; background: #8d9096; }
.tab:nth-child(5)::after, .tab-active::after { display: none; }
.tab-active { background: #fff; border-radius: 14px 14px 0 0; color: #3c4043; }
.fav { width: 21px; height: 21px; margin-right: 10px; }
.fav-p { font: bold 14px Roboto, sans-serif; fill: #fff; text-anchor: middle; }
.tab-title { flex: 1; overflow: hidden; white-space: nowrap; -webkit-mask-image: linear-gradient(90deg, #000 85%, transparent); mask-image: linear-gradient(90deg, #000 85%, transparent); }
.tab-x { width: 14px; margin-left: 7px; font-size: 15px; font-weight: 700; color: #333; text-align: center; font-family: "DejaVu Sans", sans-serif; }
.newtab { width: 16px; height: 16px; align-self: center; margin-left: 20px; }
.winctl { margin-left: auto; display: flex; align-self: flex-start; margin-top: 11px; }
.winctl svg { width: 14px; height: 14px; margin-right: 42px; }
.winctl svg:nth-child(2) { margin-right: 44px; }
.winctl svg:last-child { margin-right: 22px; }

.toolbar {
  height: 42px; flex: none; background: #fff; display: flex; align-items: center;
  padding-left: 19px;
  font-family: "Open Sans", "Noto Sans", sans-serif;
}
.nav-ic { width: 17px; height: 17px; margin-right: 23px; }
.omnibox {
  width: 1089px; height: 35px; margin: 3px 0 0 -4px; background: #f1f3f4; border-radius: 18px;
  display: flex; align-items: center; padding: 0 12px 0 18px; font-size: 16.700px; color: #5f6368;
}
.lock { width: 12px; height: 14px; margin-right: 13px; }
.url { flex: 1; white-space: nowrap; overflow: hidden; }
.url-host { color: #202124; }
.star { width: 20px; height: 20px; }
.extensions { display: flex; align-items: center; margin-left: 16px; margin-top: 3px; gap: 16px; }
.extensions svg { width: 24px; height: 24px; }
.ext-a { font: bold 14px Roboto, sans-serif; fill: #fff; text-anchor: middle; }
.avatar { width: 28px; height: 28px; border-radius: 50%; background: #ec407a; color: #fff; font-size: 18px; line-height: 26px; text-align: center; margin: 0 -2px; }

.bookmarks {
  height: 44px; flex: none; background: #fff; border-bottom: 2px solid #dadce0;
  display: grid; align-items: center; padding: 0 0 2px 20px;
  grid-template-columns: 130px 194px 191px 195px 192px 193px 191px 194px 145px 236px 1fr;
  font-family: "Open Sans", "Noto Sans", sans-serif; font-size: 14.800px; color: #3c4043;
}
.bm { display: flex; align-items: center; gap: 10px; white-space: nowrap; letter-spacing: -.2px; }
.bm-apps { gap: 8px; }
.bm svg { width: 20px; height: 20px; }
.bm-w { font: bold 13px "Liberation Serif", serif; fill: #d6202a; text-anchor: middle; }
.bm-more { font-size: 17px; color: #5f6368; }

/* App frame */
.app { flex: 1; min-height: 0; display: flex; background: #f0f0f0; }
.rail {
  width: 71px; flex: none; background: #fff; border-right: 2px solid #dadde1;
  display: flex; flex-direction: column; justify-content: space-between; align-items: center;
  padding: 0 0 17px;
}
.rail-top, .rail-bottom { display: flex; flex-direction: column; align-items: center; }
.rail-ic { width: 28px; height: 28px; }
.rail-home { margin-top: 19px; }
.rail-grid { width: 23px; height: 23px; margin-top: 30px; }
.rail-biz { width: 30px; height: 30px; margin-top: 23px; }
.rail-gauge { width: 30px; height: 30px; margin-top: 53px; }
.rail-active { width: 50px; height: 50px; margin-top: 15px; border-radius: 6px; background: #ebf2ff; display: flex; align-items: center; justify-content: center; }
.rail-active svg { width: 30px; height: 26px; }
.rail-sep { width: 30px; height: 2px; background: #dadde1; margin-bottom: 20px; }
.rail-bottom > .rail-ic, .rail-bell { margin-bottom: 17px; }
.rail-bottom > .rail-ic:last-child { margin-bottom: 0; }
.rail-bell { position: relative; }
.bell-badge { position: absolute; left: 11px; top: -4px; width: 21px; height: 17px; background: #fa383e; color: #fff; border-radius: 3px; font-size: 13px; line-height: 17px; text-align: center; }
.rail-q { font: 16px Roboto, sans-serif; fill: #4b4f56; text-anchor: middle; }

.workspace { flex: 1; min-width: 0; padding: 0 8px 0 9px; display: flex; flex-direction: column; }

.btn {
  height: 45px; border-radius: 8px; background: #f0f0f0; font-size: 17.500px; color: #1c1e21;
  display: inline-flex; align-items: center; justify-content: center; flex: none; white-space: nowrap;
}
.btn svg { width: 22px; height: 22px; }
.btn-off { background: #e5e5e5; color: #b3b3b3; }
.caret { display: inline-block; width: 0; height: 0; border: 7px solid transparent; border-top: 8px solid #1c1e21; border-bottom: 0; flex: none; border-radius: 2px; }

.page-head { height: 66px; flex: none; display: flex; align-items: center; padding: 1px 0 0 0; }
.page-title { margin: 0; font-size: 22.500px; font-weight: 700; color: #333a45; }
.account { font-size: 17.500px; color: #4b4f56; margin-left: 21px; margin-right: 12px; }
.updated { margin-left: auto; font-size: 17.500px; margin-right: 11px; }
.btn-refresh { width: 50px; }
.btn-drafts { width: 136px; margin-left: 10px; }
.btn-review { width: 226px; margin-left: 11px; }
.btn-more { width: 50px; margin-left: 11px; font-size: 10px; letter-spacing: 1px; color: #606770; padding-right: 3px; }

.filter-card {
  height: 65px; flex: none; background: #fff; border-radius: 12px; display: flex; align-items: center;
  padding: 0 10px; width: 1775px;
}
.btn-ara { width: 117px; gap: 9px; padding-right: 3px; }
.btn-ara .caret { margin-left: 4px; }
.btn-filter { width: 148px; margin-left: 10px; gap: 9px; padding-right: 2px; }
.btn-filter .caret { margin-left: 4px; }
.btn-filter svg { width: 20px; height: 20px; }
.btn-plus { width: 50px; margin-left: 10px; }
.btn-plus svg { width: 16px; height: 16px; }
.filter-hint { margin-left: 10px; font-size: 17.500px; color: #7c7f85; }
.btn-date { width: 346px; margin-left: auto; gap: 17px; }

.tabs { display: grid; grid-template-columns: 578px 579px 578px; gap: 10px; padding: 15px 0 0 10px; flex: none; height: 71px; width: 1775px; }
.level {
  align-self: end; height: 51px; background: #f9f9f9; border-radius: 12px 12px 0 0;
  display: flex; align-items: center; padding: 0 17px 2px; gap: 10px;
}
.level-active { height: 56px; background: #fff; padding: 0 14px 0 16px; }
.level-ic { width: 24px; height: 24px; }
.level-active .level-ic { width: 28px; height: 27px; margin-right: -1px; }
.level-name { color: #1c5bc7; font-weight: 700; font-size: 20px; margin-left: 2px; }
.level-label { font-weight: 700; color: #1c1e21; font-size: 20px; }
.chip { margin-left: auto; height: 35px; width: 110px; border-radius: 18px; background: #1877f2; color: #fff; font-size: 17.500px; display: flex; align-items: center; justify-content: center; gap: 10px; padding-right: 2px; }
.chip-x { font-size: 15px; font-family: "DejaVu Sans", sans-serif; }

.table-card {
  position: relative; width: 1776px; height: 613px; flex: none; margin-left: 1px; background: #fff; border-radius: 12px;
  box-shadow: 0 1px 2px rgba(0,0,0,.15); display: flex; flex-direction: column; overflow: hidden;
}
.actions { height: 71px; flex: none; display: flex; align-items: center; padding: 2px 10px 0; border-bottom: 2px solid #dadde1; }
.btn-create { width: 124px; background: #63be09; color: #fff; font-weight: 700; font-size: 18px; gap: 13px; }
.btn-create svg { width: 16px; height: 16px; }
.split { display: flex; gap: 3px; margin-left: 10px; }
.btn-dup { width: 120px; gap: 8px; padding-right: 2px; border-radius: 8px 0 0 8px; }
.btn-dup svg { width: 26px; height: 26px; }
.btn-edit { width: 127px; gap: 7px; padding-right: 3px; border-radius: 8px 0 0 8px; }
.btn-edit svg { width: 24px; height: 24px; }
.btn-split { width: 40px; border-radius: 0 8px 8px 0; }
.btn-ab { width: 136px; margin-left: 11px; gap: 7px; padding-right: 7px; }
.btn-ab svg { width: 24px; height: 24px; }
.btn-clip { width: 50px; margin-left: 9px; }
.icon-group { display: flex; gap: 3px; margin-left: 10px; }
.btn-ic-a { width: 49px; border-radius: 8px 0 0 8px; }
.btn-ic-b { width: 50px; border-radius: 0; }
.btn-ic-c { width: 54px; border-radius: 0; }
.btn-ic-d { width: 49px; border-radius: 0 8px 8px 0; }
.btn-rules { width: 121px; margin-left: 12px; gap: 14px; padding-left: 4px; }
.setup-label { margin-left: 21px; width: 105px; font-size: 17.500px; line-height: 25px; color: #1c1e21; }
.toggle-setup { margin-left: -1px; }
.btn-cols { width: 252px; margin-left: 11px; justify-content: flex-start; padding-left: 14px; gap: 10px; }
.btn-cols svg { width: 20px; height: 20px; }
.btn-cols .caret { margin-left: 4px; }
.btn-break { width: 137px; margin-left: 10px; justify-content: flex-start; padding-left: 16px; gap: 9px; }
.btn-break svg { width: 20px; height: 20px; }
.btn-break .caret { margin-left: 5px; }
.btn-reports { width: 127px; margin-left: 10px; gap: 14px; padding-left: 5px; }

.toggle { display: block; position: relative; width: 45px; height: 26px; border-radius: 13px; background: #cfe0f8; flex: none; }
.toggle::after { content: ""; position: absolute; right: 0; top: 0; width: 25px; height: 26px; border-radius: 50%; background: #3578e5; }
.toggle-off { background: #e2e2e2; }
.toggle-off::after { left: 2px; right: auto; width: 23px; background: #5e6570; }

/* Table grid */
.grid-wrap { display: flex; flex-direction: column; height: 523px; overflow: hidden; flex: none; }
.row {
  display: grid; flex: none; width: 1809px; height: 57.670px;
  grid-template-columns: 63px 65px 401px 246px 132px 125px 125px 123px 149px 128px 253px;
  font-size: 17.500px; color: #444950; background: #fff;
}
.row-alt { background: #f5f6f7; }
.row-hover { background: #f0f0f0; }
.row-selected { background: #ebf3fd; }
.row-head { height: 81px; margin-bottom: -1px; position: relative; z-index: 1; background: #f5f6f7; border-bottom: 2px solid #dadde1; color: #1c1e21; font-weight: 700; font-size: 18.200px; }
.rows { height: 365px; flex: none; overflow: hidden; position: relative; }
.cell { border-right: 1px solid #dadde1; padding: 5px 16px 5px 15px; line-height: 26px; white-space: nowrap; overflow: hidden; min-width: 0; }
.row > .cell:last-child { border-right: 0; }
.row-head .cell { display: flex; align-items: center; justify-content: flex-end; text-align: right; line-height: 20px; padding: 0 15px; }
.row-head .cell:first-child, .cell-check { display: flex; justify-content: center; padding: 12px 1px 0 0; align-items: flex-start; }
.row-head .cell:first-child { align-items: center; padding: 0 2px 0 0; }
.cell-toggle { padding: 16px 0 0 9px; }
.row-head .th-left { justify-content: space-between; text-align: left; padding-left: 15px; font-size: 18.800px; }
.row-head .th-active { color: #1877f2; padding-left: 14px; }
.sort { width: 0; height: 0; border: 5px solid transparent; display: block; }
.sort-down { border-top: 6px solid #8d949e; border-bottom: 0; }
.sort-up { border-bottom: 6px solid #1877f2; border-top: 0; }
.check { display: block; width: 30px; height: 30px; background: #fff; border: 1.500px solid #dadde1; border-radius: 8px; padding: 5px; flex: none; }
.check svg { width: 17px; height: 17px; }
.cell-name { padding: 5px 15px 0 15px; line-height: 25px; }
.cell-name a { color: #216fdb; }
.cell-status { padding-top: 6px; display: flex; align-items: flex-start; }
.dot { width: 10px; height: 10px; border-radius: 50%; background: #63be09; margin: 8px 10px 0 0; }
.cell-off { color: #90949c; }
.cell-text { padding-left: 15px; color: #444950; letter-spacing: .3px; }
.num { text-align: right; }
.num small, .foot-name small { display: block; font-size: 15px; color: #90949c; }
.num small.trunc { text-align: left; }
.sel { background: #3390ff; color: #fff; display: inline-block; line-height: 25px; }
.name-pen { display: inline-block; width: 17px; height: 17px; margin-left: 6px; vertical-align: 2px; }
.row-tools { display: flex; font-size: 15px; line-height: 18px; color: #1c1e21; margin-top: -2px; }
.tool { display: flex; align-items: center; gap: 2px; margin-right: 18px; }
.tool svg { width: 14px; height: 15px; fill: #1c1e21; }
.tool-edit svg { margin-right: 1px; }

.row-foot {
  height: 78px; box-shadow: 0 -3px 4px rgba(0,0,0,.09); position: relative; border-bottom: 2px solid #f0f0f0; border-top: 1px solid #e5e5e5;
  grid-template-columns: 128px 401px 503px 125px 123px 149px 128px 253px;
}
.foot-name { display: flex; gap: 25px; padding: 5px 15px 0 14px; color: #1c1e21; overflow: visible; }
.foot-chevron { width: 10px; height: 16px; margin-top: 9px; }
.foot-title { display: flex; align-items: center; font-weight: 700; gap: 5px; height: 26px; font-size: 18.400px; }
.foot-title svg { width: 21px; height: 21px; }
.foot-title .foot-info { width: 15px; height: 15px; margin-left: 3px; }
.foot-num { color: #1c1e21; font-weight: 700; }
.foot-dash { color: #606770; }
.foot-num small { font-weight: 400; }
.foot-blank { border-right: 1px solid #dadde1; }
.hscroll { flex: 1; padding: 5px 5px 0; }
.hscroll-thumb { width: 1654px; height: 9px; border-radius: 5px; background: #bfbfbf; }
.vscroll { position: absolute; left: 1762px; top: 157px; width: 7px; height: 45px; border-radius: 4px; background: #c4c4c4; }

.side-panel {
  width: 55px; flex: none; background: #606060; display: flex; flex-direction: column; align-items: center; padding-top: 26px;
}
.panel-x { width: 16px; height: 16px; margin-bottom: 24px; }
.panel-btn { width: 45px; height: 45px; border-radius: 8px; background: #7a7a7a; display: flex; align-items: center; justify-content: center; margin-bottom: 11px; }
.panel-btn svg { width: 22px; height: 22px; fill: #fff; }

/* Download shelf */
.downloads {
  height: 59px; flex: none; background: #fff; display: flex; align-items: center; padding-left: 28px;
  font-family: "Open Sans", "Noto Sans", sans-serif; font-size: 14.700px; color: #3c4043;
}
.dl-file { width: 15px; height: 19px; }
.dl-name { margin-left: 18px; width: 192px; letter-spacing: -.2px; white-space: nowrap; }
.dl-chev { width: 12px; height: 8px; }
.dl-sep { width: 1px; height: 45px; background: #dadce0; margin-left: 22px; }
.dl-all { margin-left: auto; width: 142px; height: 40px; background: #fff; border: 1px solid #dadce0; border-radius: 5px; color: #1a3f73; font-size: 14.300px; font-family: inherit; }
.dl-x { width: 12px; height: 12px; margin: 0 17px 0 17px; }

/* Taskbar */
.taskbar {
  height: 50px; flex: none; background: #10264e; display: flex; align-items: stretch; color: #fff;
  font-family: "Open Sans", "Noto Sans", sans-serif; position: relative;
}
.task { width: 62px; display: flex; align-items: center; justify-content: center; position: relative; }
.task svg { width: 20px; height: 22px; }
.task .ic-lg { width: 29px; height: 29px; }
.task-start { width: 60px; }
.task-view { width: 63px; padding-right: 4px; }
.task-active { background: #1b3d66; }
.task-open::after, .task-open-none::after { content: ""; position: absolute; left: 5px; right: 5px; bottom: 0; height: 3px; background: #7b93ad; }
.task-active::after { left: 0; right: 0; }
.ps { font: bold 15px Roboto, sans-serif; fill: #31a8ff; text-anchor: middle; }
.xl { font: bold 12px Roboto, sans-serif; fill: #fff; text-anchor: middle; }
.tray { margin-left: auto; display: flex; align-items: center; gap: 10px; }
.tray svg { width: 20px; height: 16px; }
.clock { width: 84px; margin-left: 3px; display: flex; flex-direction: column; align-items: center; justify-content: center; font-size: 13.500px; line-height: 24px; }
.notif { position: relative; width: 60px; margin-left: 8px; display: flex; align-items: center; padding-left: 8px; }
.notif svg { width: 20px; height: 20px; margin-top: -8px; }
.notif-count { position: absolute; left: 18px; top: 21px; width: 20px; height: 20px; border-radius: 50%; background: #1f4f73; border: 1px solid #6d8aa5; font-size: 13px; line-height: 18px; text-align: center; }
```
